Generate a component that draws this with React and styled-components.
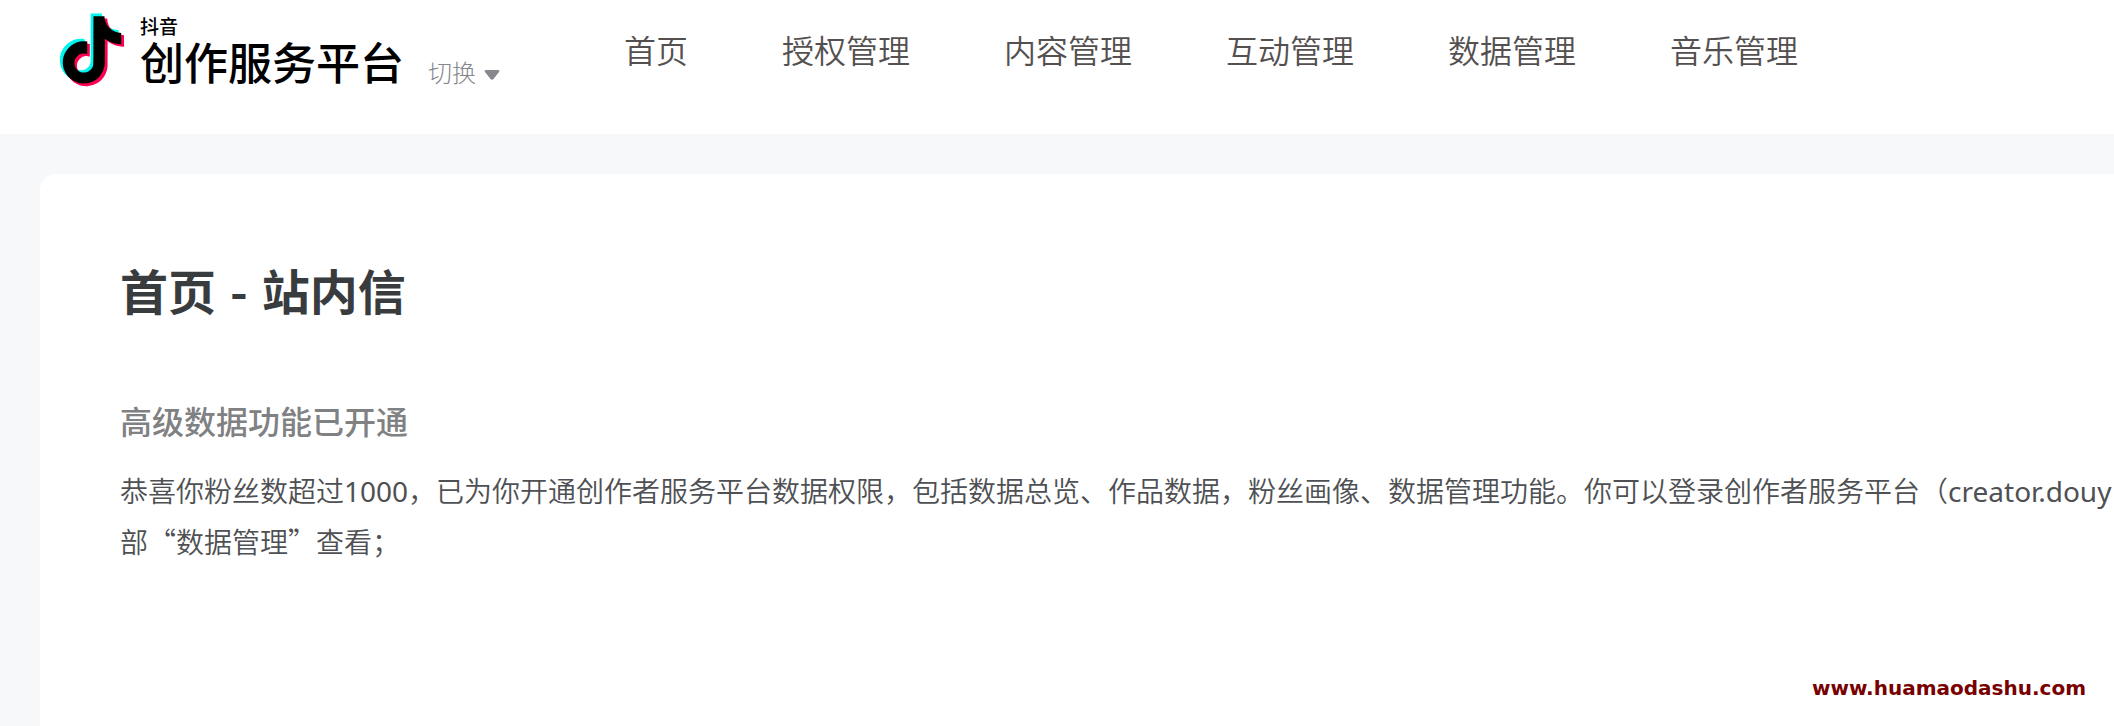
import React from 'react';
import styled, { createGlobalStyle } from 'styled-components';

const GlobalStyle = createGlobalStyle`
  * {
    box-sizing: border-box;
  }
  body {
    margin: 0;
    overflow: hidden;
    background: #f7f8fa;
    font-family: 'Noto Sans CJK SC', sans-serif;
    color: #4e5053;
  }
`;

const Page = styled.div`
  display: flex;
  flex-direction: column;
  min-height: 100vh;
`;
const Header = styled.header`
  display: flex;
  align-items: flex-start;
  height: 134px;
  padding: 12px 60px;
  background: white;
`;
const Brand = styled.a`
  display: flex;
  gap: 15px;
  color: black;
  text-decoration: none;
`;
const BrandText = styled.span`
  display: flex;
  flex-direction: column;
`;
const BrandName = styled.span`
  font-size: 19px;
  line-height: 28px;
  font-weight: 500;
`;
const BrandTitle = styled.span`
  font-size: 44px;
  line-height: 42px;
  font-weight: 500;
  white-space: nowrap;
`;
const SwitchButton = styled.button`
  display: flex;
  align-items: center;
  gap: 8px;
  margin: 44px 0 0 24px;
  padding: 0;
  border: 0;
  background: none;
  font-family: inherit;
  font-size: 24px;
  line-height: 32px;
  font-weight: 300;
  color: #86888e;
  white-space: nowrap;
`;
const Nav = styled.nav`
  display: flex;
  gap: 94px;
  margin: 15px 0 0 124px;
`;
const NavLink = styled.a`
  font-size: 32px;
  line-height: 44px;
  font-weight: 350;
  color: #545050;
  text-decoration: none;
  white-space: nowrap;
`;
const Card = styled.main`
  flex: 1;
  margin: 40px 0 0 40px;
  padding: 80px 0 0 80px;
  border-radius: 16px 0 0 0;
  background: white;
`;
const Title = styled.h1`
  display: flex;
  gap: 14px;
  margin: 0;
  font-size: 48px;
  line-height: 70px;
  font-weight: 700;
  color: #393c3f;
`;
const Subtitle = styled.h2`
  margin: 72px 0 21px;
  font-size: 32px;
  line-height: 48px;
  font-weight: 500;
  color: #7f8183;
`;
const Message = styled.p`
  margin: 0;
  font-size: 28px;
  line-height: 50px;
  font-weight: 350;
  white-space: nowrap;
`;
const Latin = styled.span`
  font-family: 'Noto Sans', sans-serif;
  font-weight: 400;
`;
const Watermark = styled.div`
  position: absolute;
  right: 28px;
  bottom: 24px;
  font-family: 'DejaVu Sans', sans-serif;
  font-size: 20px;
  line-height: 28px;
  font-weight: 700;
  color: #780000;
`;

const NOTE =
  'M12.525.02c1.31-.02 2.61-.01 3.91-.02.08 1.53.63 3.09 1.75 4.17 1.12 1.11 2.7 1.62 4.24 1.79v4.03c-1.44-.05-2.89-.35-4.2-.97-.57-.26-1.1-.59-1.62-.93-.01 2.92.01 5.84-.02 8.75-.08 1.4-.54 2.79-1.35 3.94-1.31 1.92-3.58 3.17-5.91 3.21-1.43.08-2.86-.31-4.08-1.03-2.02-1.19-3.44-3.37-3.65-5.71-.02-.5-.03-1-.01-1.49.18-1.9 1.12-3.72 2.58-4.96 1.66-1.44 3.98-2.13 6.15-1.72.02 1.48-.04 2.96-.04 4.44-.99-.32-2.15-.23-3.02.37-.63.41-1.11 1.04-1.36 1.75-.21.51-.15 1.07-.14 1.61.24 1.64 1.82 3.02 3.5 2.87 1.12-.01 2.19-.66 2.77-1.61.19-.33.4-.67.41-1.06.1-1.79.06-3.57.07-5.36.01-4.03-.01-8.05.02-12.07z';

// black note over its cyan and red shadows
const Logo = () => (
  <svg width="65" height="76" viewBox="0 0 65 76" aria-hidden="true">
    <path d={NOTE} transform="translate(-4.6 1.500) scale(2.82)" fill="#00f5ee" />
    <path d={NOTE} transform="translate(.8 6.500) scale(2.82)" fill="#ff0050" />
    <path d={NOTE} transform="translate(-1.600 4.200) scale(2.8)" />
  </svg>
);

const Caret = () => (
  <svg width="16" height="18" viewBox="0 0 16 18" aria-hidden="true">
    <path
      d="M2 7h12q2 0 1 2L9.500 16q-1.500 1.500-3 0L1 9q-1-2 1-2z"
      fill="#86888e"
    />
  </svg>
);

const links = [
  '首页',
  '授权管理',
  '内容管理',
  '互动管理',
  '数据管理',
  '音乐管理',
];

const App = () => (
  <>
    <GlobalStyle />
    <Page lang="zh-CN">
      <Header>
        <Brand href="#">
          <Logo />
          <BrandText>
            <BrandName>抖音</BrandName>
            <BrandTitle>创作服务平台</BrandTitle>
          </BrandText>
        </Brand>
        <SwitchButton type="button">
          切换
          <Caret />
        </SwitchButton>
        <Nav>
          {links.map(link => (
            <NavLink key={link} href="#">
              {link}
            </NavLink>
          ))}
        </Nav>
      </Header>
      <Card>
        <Title>
          <span>首页</span>
          <span>-</span>
          <span>站内信</span>
        </Title>
        <Subtitle>高级数据功能已开通</Subtitle>
        <Message>
          恭喜你粉丝数超过<Latin>1000</Latin>
          ，已为你开通创作者服务平台数据权限，包括数据总览、作品数据，粉丝画像、数据管理功能。你可以登录创作者服务平台（
          <Latin>creator.douy</Latin>
          <br />
          部“数据管理”查看；
        </Message>
      </Card>
      <Watermark>www.huamaodashu.com</Watermark>
    </Page>
  </>
);

export default App;
